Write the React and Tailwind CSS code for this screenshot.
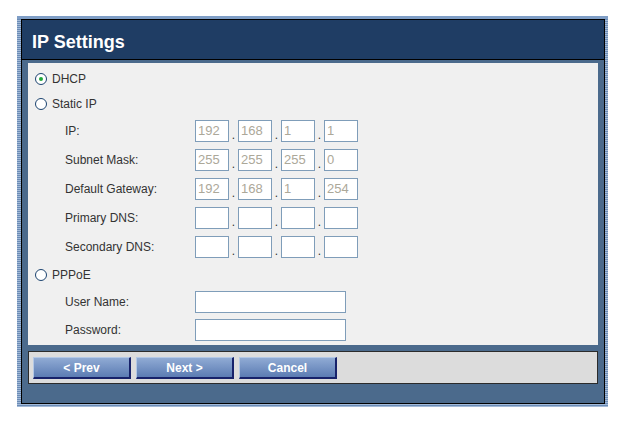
import { useState } from "react";

const ipRows = [
  { label: "IP:", values: ["192", "168", "1", "1"] },
  { label: "Subnet Mask:", values: ["255", "255", "255", "0"] },
  { label: "Default Gateway:", values: ["192", "168", "1", "254"] },
  { label: "Primary DNS:", values: ["", "", "", ""] },
  { label: "Secondary DNS:", values: ["", "", "", ""] },
];

function Radio({ checked, label, onClick }) {
  return (
    <label className="flex items-center gap-[5px] cursor-pointer" onClick={onClick}>
      <span className="w-[12px] h-[12px] rounded-full border-[1.5px] border-[#1c4470] bg-white flex items-center justify-center">
        {checked && <span className="w-[4px] h-[4px] rounded-full bg-[#21a83a]" />}
      </span>
      <span className="text-[12px] text-[#333]">{label}</span>
    </label>
  );
}

function IpInput({ value, disabled }) {
  return (
    <input
      defaultValue={value}
      disabled={disabled}
      className="w-[34px] h-[22px] border border-[#7f9db9] bg-white px-[2px] text-[13px] text-[#333] disabled:text-[#aca899] outline-none"
    />
  );
}

function Button({ children }) {
  return (
    <button className="w-[98px] h-[22px] bg-gradient-to-b from-[#90abd4] to-[#5c7cb3] border-t border-l border-t-[#b3c8e6] border-l-[#b3c8e6] border-r-2 border-b-2 border-r-[#17226a] border-b-[#17226a] text-white font-bold text-[12px] leading-none">
      {children}
    </button>
  );
}

export default function App() {
  const [mode, setMode] = useState("dhcp");
  const ipDisabled = mode !== "static";

  return (
    <div
      className="w-[619px] h-[421px] bg-white pt-[16px] pl-[17px]"
      style={{ fontFamily: '"Liberation Sans", Arial, sans-serif' }}
    >
      <div className="w-[591px] h-[391px] border-t-[3px] border-[#7f9ec6] pl-[4px] pr-[3px] pb-[3px] bg-[repeating-linear-gradient(180deg,#6b8cb6_0px,#6b8cb6_1px,#a3bad8_1px,#a3bad8_2px)]">
        <div className="h-full border border-black bg-[#4b6a8c]">
          <div className="h-[40px] bg-[#1f3d64] border-b border-black flex items-center pl-[10px] pt-[6px]">
            <h1 className="text-white font-bold text-[18px]">IP Settings</h1>
          </div>

          <div className="mx-[6px] mt-[3px] h-[282px] bg-[#f0f0f0] pt-[3px] pl-[7px] flex flex-col">
            <div className="h-[25px] flex items-center">
              <Radio checked={mode === "dhcp"} label="DHCP" onClick={() => setMode("dhcp")} />
            </div>
            <div className="h-[25px] flex items-center">
              <Radio checked={mode === "static"} label="Static IP" onClick={() => setMode("static")} />
            </div>
            {ipRows.map((row) => (
              <div key={row.label} className="h-[29px] flex items-center pl-[30px]">
                <span className="w-[130px] text-[12px] text-[#333]">{row.label}</span>
                <div className="flex items-end">
                  {row.values.map((v, i) => (
                    <div key={i} className="flex items-end">
                      {i > 0 && (
                        <span className="w-[9px] text-center text-[12px] leading-[14px] text-[#333]">.</span>
                      )}
                      <IpInput value={v} disabled={ipDisabled} />
                    </div>
                  ))}
                </div>
              </div>
            ))}
            <div className="h-[28px] flex items-center">
              <Radio checked={mode === "pppoe"} label="PPPoE" onClick={() => setMode("pppoe")} />
            </div>
            <div className="h-[26px] flex items-center pl-[30px]">
              <span className="w-[130px] text-[12px] text-[#333]">User Name:</span>
              <input className="w-[151px] h-[22px] border border-[#7f9db9] bg-white outline-none text-[12px] px-[2px]" />
            </div>
            <div className="h-[30px] flex items-center pl-[30px]">
              <span className="w-[130px] text-[12px] text-[#333]">Password:</span>
              <input type="password" className="w-[151px] h-[22px] border border-[#7f9db9] bg-white outline-none text-[12px] px-[2px]" />
            </div>
          </div>

          <div className="mx-[6px] mt-[6px] h-[33px] bg-[#dcdcdc] border border-[#2b2b2b] pl-[4px] pt-[5px] flex gap-[5px]">
            <Button>&lt; Prev</Button>
            <Button>Next &gt;</Button>
            <Button>Cancel</Button>
          </div>
        </div>
      </div>
    </div>
  );
}
